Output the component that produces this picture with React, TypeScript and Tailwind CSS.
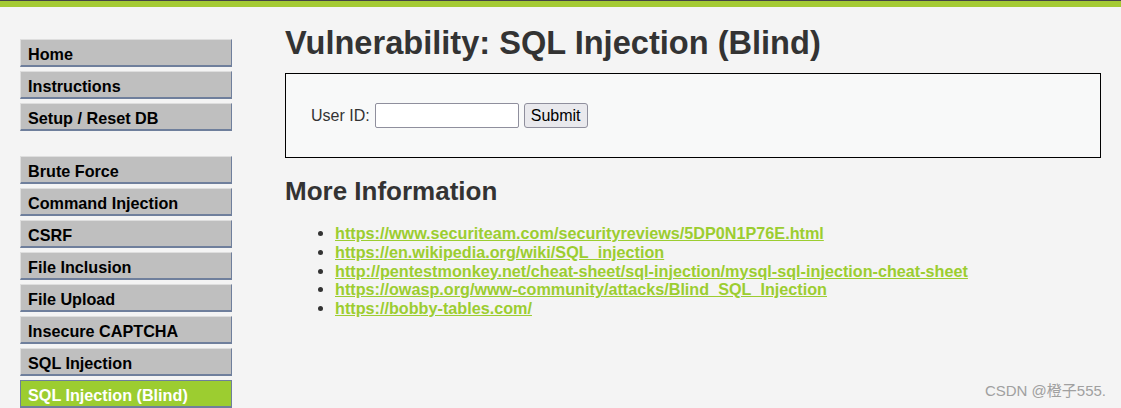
import React from "react";

const group1 = ["Home", "Instructions", "Setup / Reset DB"];
const group2 = [
  "Brute Force",
  "Command Injection",
  "CSRF",
  "File Inclusion",
  "File Upload",
  "Insecure CAPTCHA",
  "SQL Injection",
  "SQL Injection (Blind)",
];

const links = [
  "https://www.securiteam.com/securityreviews/5DP0N1P76E.html",
  "https://en.wikipedia.org/wiki/SQL_injection",
  "http://pentestmonkey.net/cheat-sheet/sql-injection/mysql-sql-injection-cheat-sheet",
  "https://owasp.org/www-community/attacks/Blind_SQL_Injection",
  "https://bobby-tables.com/",
];

function MenuItem({ label, active }: { label: string; active?: boolean }) {
  return (
    <li>
      <a
        className={
          active
            ? "block h-[28px] w-[212px] pl-[7px] leading-[28px] text-[16.2px] font-bold text-white bg-[#9ccd30] border-[1px] border-[#6f7f9c] border-b-[2px] overflow-hidden"
            : "block h-[28px] w-[212px] pl-[7px] leading-[28px] text-[16.2px] font-bold text-black bg-[#bfbfbf] border-t-[1px] border-l-[1px] border-t-[#dedede] border-l-[#dedede] border-r-[1px] border-b-[2px] border-r-[#6f7f9c] border-b-[#6f7f9c] overflow-hidden"
        }
      >
        {label}
      </a>
    </li>
  );
}

export default function App() {
  return (
    <div
      className="w-[1121px] h-[408px] overflow-hidden bg-[#f4f4f4] relative"
      style={{ fontFamily: '"Liberation Sans", Arial, sans-serif' }}
    >
      <div className="h-[1px] bg-[#444]" />
      <div className="h-[6px] bg-[#a4ca33]" />
      <div className="flex">
        <div className="w-[285px] shrink-0 pl-[20px] pt-[32px]">
          <ul className="flex flex-col gap-[4px]">
            {group1.map((l) => (
              <MenuItem key={l} label={l} />
            ))}
          </ul>
          <ul className="flex flex-col gap-[4px] mt-[25px]">
            {group2.map((l) => (
              <MenuItem key={l} label={l} active={l === "SQL Injection (Blind)"} />
            ))}
          </ul>
        </div>
        <div className="flex-1 pr-[20px]">
          <h1 className="text-[32.6px] font-bold text-[#333] leading-[36px] mt-[18px]">
            Vulnerability: SQL Injection (Blind)
          </h1>
          <div className="mt-[12px] w-[816px] h-[85px] border border-black bg-[#f8f9f9] flex items-center pl-[25px]">
            <span className="text-[16px] text-[#333] mr-[5px]">User ID:</span>
            <input
              type="text"
              className="w-[144px] h-[25px] bg-white border border-[#8f8f9d] rounded-[2px] px-1 text-[14px]"
            />
            <button className="ml-[5px] h-[25px] w-[64px] text-[16px] text-black bg-[#e9e9ed] border border-[#8f8f9d] rounded-[3px] leading-[20px]">
              Submit
            </button>
          </div>
          <h2 className="text-[26px] font-bold text-[#333] leading-[30px] mt-[18px]">
            More Information
          </h2>
          <ul className="mt-[18px] pl-[50px] list-disc text-[16.2px] leading-[18.75px] marker:text-[#333]">
            {links.map((l) => (
              <li key={l}>
                <a className="font-bold text-[#9ccd30] underline">{l}</a>
              </li>
            ))}
          </ul>
        </div>
      </div>
      <div
        className="absolute right-[15px] bottom-[6px] text-[15px] text-[#a0a0a0]"
        style={{ fontFamily: '"Liberation Sans", Arial, "Noto Sans CJK SC", sans-serif' }}
      >
        CSDN @橙子555.
      </div>
    </div>
  );
}
